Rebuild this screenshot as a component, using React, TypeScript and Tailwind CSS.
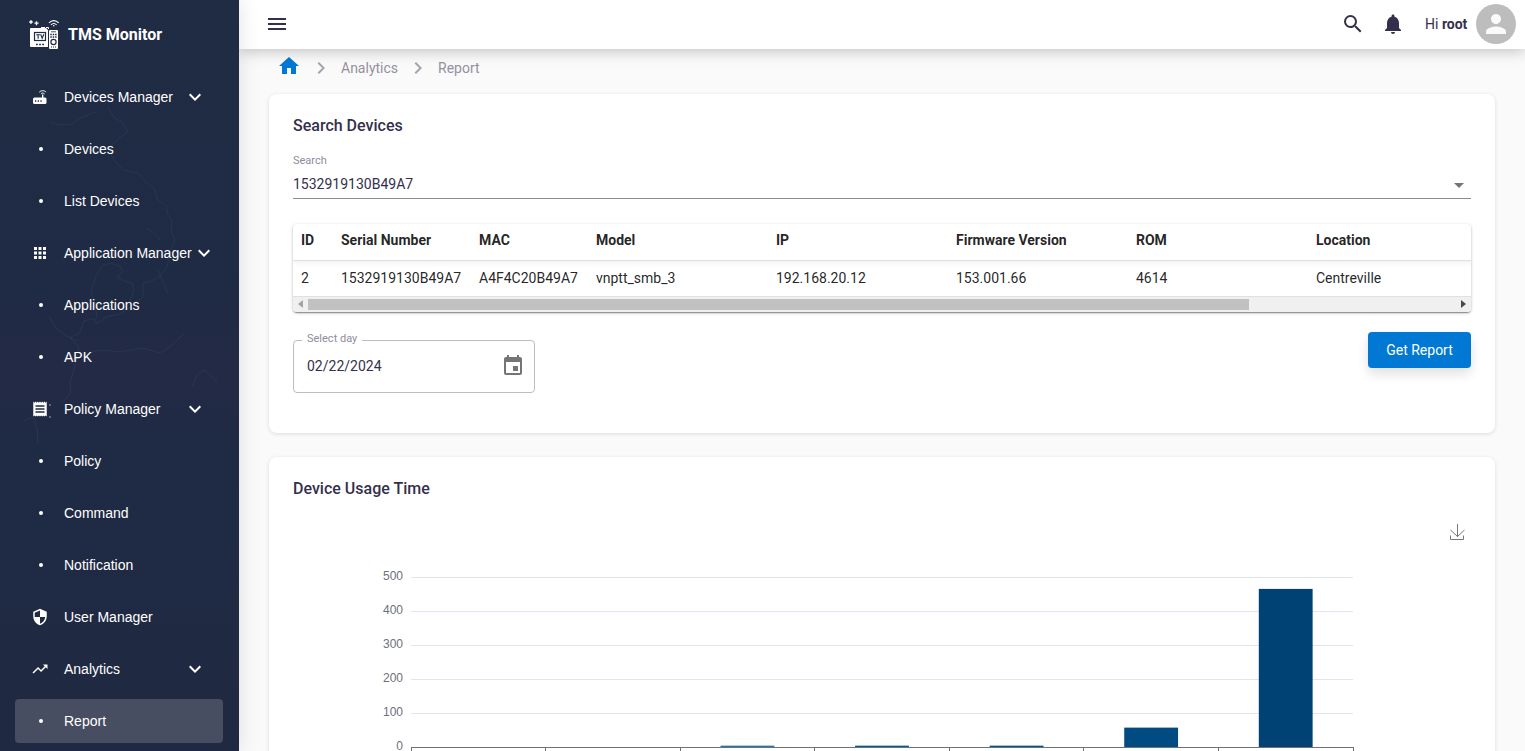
import { useState } from "react";
import type { ReactNode } from "react";
import {
  MdApps,
  MdChevronRight,
  MdEvent,
  MdExpandMore,
  MdHome,
  MdMenu,
  MdNotifications,
  MdPerson,
  MdSearch,
  MdSecurity,
  MdTrendingUp,
} from "react-icons/md";

type NavEntry = {
  label: string;
  icon?: ReactNode;
  group?: boolean;
  active?: boolean;
};

const RouterIcon = () => (
  <svg viewBox="0 0 18 18" className="h-[18px] w-[18px]" fill="none" stroke="currentColor">
    <path d="M3.500 9.500H14a1.500 1.500 0 0 1 1.500 1.500v3.500A1.500 1.500 0 0 1 14 16H3.500A1.500 1.500 0 0 1 2 14.500V11a1.500 1.500 0 0 1 1.500-1.500z" fill="currentColor" stroke="none" />
    <path d="M11.700 10V6.500" strokeWidth="1.400" />
    <path d="M8.300 4.200c1.700-2 5.100-2 6.800 0" />
    <path d="M9.900 5.900c.9-1.100 2.700-1.100 3.600 0" />
    <path d="M4 13h1.300M6.700 13H8M9.400 13h1.300" stroke="#1f2a44" strokeWidth="1.300" />
  </svg>
);

const PolicyIcon = () => (
  <svg viewBox="0 0 24 24" className="h-[18px] w-[18px] overflow-visible" fill="currentColor">
    <path d="M18 17H6v-2h12v2zm0-4H6v-2h12v2zm0-4H6V7h12v2zM3 22l1.500-1.500L6 22l1.500-1.500L9 22l1.500-1.500L12 22l1.500-1.500L15 22l1.500-1.500L18 22l1.500-1.500L21 22V2l-1.500 1.500L18 2l-1.500 1.500L15 2l-1.500 1.500L12 2l-1.500 1.500L9 2 7.500 3.500 6 2 4.500 3.500 3 2v20z" />
    <path d="M24.500 6h1.500v1.200h-1.500zM24.500 22h1.500v1.200h-1.500z" />
  </svg>
);

const navItems: NavEntry[] = [
  { label: "Devices Manager", icon: <RouterIcon />, group: true },
  { label: "Devices" },
  { label: "List Devices" },
  { label: "Application Manager", icon: <MdApps size={18} />, group: true },
  { label: "Applications" },
  { label: "APK" },
  { label: "Policy Manager", icon: <PolicyIcon />, group: true },
  { label: "Policy" },
  { label: "Command" },
  { label: "Notification" },
  { label: "User Manager", icon: <MdSecurity size={18} /> },
  { label: "Analytics", icon: <MdTrendingUp size={18} />, group: true },
  { label: "Report", active: true },
];

const columns = [
  { title: "ID", width: "w-10", value: "2" },
  { title: "Serial Number", width: "w-[138px]", value: "1532919130B49A7" },
  { title: "MAC", width: "w-[117px]", value: "A4F4C20B49A7" },
  { title: "Model", width: "w-[180px]", value: "vnptt_smb_3" },
  { title: "IP", width: "w-[180px]", value: "192.168.20.12" },
  { title: "Firmware Version", width: "w-[180px]", value: "153.001.66" },
  { title: "ROM", width: "w-[180px]", value: "4614" },
  { title: "Location", width: "w-[420px]", value: "Centreville" },
];

const usage = [
  { value: 0, color: "#2a7ab0" },
  { value: 0, color: "#2a7ab0" },
  { value: 4, color: "#1f77b4" },
  { value: 4, color: "#00609f" },
  { value: 4, color: "#005591" },
  { value: 57, color: "#004c82" },
  { value: 465, color: "#004274" },
];

function Logo() {
  return (
    <svg viewBox="0 0 30 30" className="h-[30px] w-[30px]" fill="none">
      <path d="M2 0l.8 1.200L4 2l-1.200.8L2 4l-.8-1.200L0 2l1.200-.8z" fill="#fff" stroke="#fff" strokeWidth=".4" />
      <path d="M7.500 1.200v4M5.500 3.200h4" stroke="#fff" strokeWidth="1.300" />
      <path d="M20 3c2.600-3.200 7-3.200 9.600 0M22 4.800c1.600-1.800 4-1.800 5.600 0" stroke="#fff" strokeWidth="1.100" />
      <circle cx="24.800" cy="5.800" r=".8" fill="#fff" />
      <path d="M12 7.500h7.500V10" stroke="#fff" strokeDasharray="4 1" />
      <path d="M1.500 8H17l2 2v17H2a1 1 0 0 1-1-1V8.500z" fill="#fff" />
      <rect x="5.500" y="12.500" width="11" height="8" stroke="#1f2a44" strokeWidth="1.200" />
      <path d="M7.300 14.700h3.600M9.100 14.700v4M11.600 14.300l1.600 4 1.600-4" stroke="#1f2a44" strokeWidth="1.100" />
      <path d="M7 24.500h1.800M10.100 24.500h1.800M13.200 24.500H15" stroke="#1f2a44" strokeWidth="1.600" />
      <rect x="19.500" y="9.500" width="10" height="20" rx="1.500" fill="#fff" stroke="#1f2a44" />
      <path d="M21.300 14.500h6.400M21.300 17h6.400" stroke="#1f2a44" strokeWidth="1.400" strokeDasharray="1.500 .9" />
      <path d="M22 11.800h5" stroke="#1f2a44" strokeWidth=".8" />
      <circle cx="24.500" cy="22" r="2.600" stroke="#1f2a44" strokeWidth="1.200" />
      <path d="M22 27h5" stroke="#1f2a44" strokeDasharray="1 1" />
    </svg>
  );
}

// Faint borders drawn behind the navigation
function MapBackdrop() {
  return (
    <svg
      viewBox="0 0 239 751"
      preserveAspectRatio="xMidYMin slice"
      className="pointer-events-none absolute inset-0 h-full w-full"
      fill="none"
      stroke="#3a5876"
      strokeOpacity=".26"
      aria-hidden="true"
    >
      <path d="M50 122L60 125 72 124 80 118 96 112M108 106L114 118 122 122 128 132 120 137 112 145 110 153 115 162 124 170 138 173 146 182 155 190 157 199 166 206 168 215 172 220 171 231 175 240 170 252 167 267 160 276 150 282 143 283 143 297 133 305 120 314 106 317 97 324 94 318 84 321 80 332 70 338 79 347 76 362 70 383 71 392 63 402" />
      <path d="M97 318L95 303 91 292 96 276 102 266 110 263 120 266 123 272 117 277 124 281 132 283 134 291 129 303" />
      <path d="M49 316L56 328 66 336 78 341M86 354L100 350 120 352 142 348 160 353 172 345 184 334M158 270L163 282 168 294M146 228L153 232 160 240" />
      <path d="M24 421L33 417 37 428 38 444M192 386L198 374 204 370 218 382" />
    </svg>
  );
}

function Sidebar() {
  return (
    <aside className="relative z-20 w-[239px] shrink-0 bg-[linear-gradient(180deg,#202b44_0%,#1f2a44_38%,#232a45_50%,#1f2a44_60%,#1f2942_100%)] text-white shadow-[0_0_20px_rgba(0,0,0,0.12)]">
      <MapBackdrop />
      <div className="relative flex h-[75px] items-start gap-[9px] pt-5 pl-[29px]">
        <Logo />
        <span className="text-base leading-[30px] font-bold">TMS Monitor</span>
      </div>
      <nav className="relative flex flex-col gap-2 pr-4 pb-2 pl-[15px] font-['Liberation_Sans',Arial,sans-serif]">
        {navItems.map((item) => (
          <a
            key={item.label}
            href="#"
            aria-current={item.active ? "page" : undefined}
            className={
              item.active
                ? "flex h-11 items-center rounded bg-[#474e61] pl-4 text-sm"
                : "flex h-11 items-center rounded pl-4 text-sm hover:bg-white/5"
            }
          >
            <span className="mr-[15px] flex w-[18px] shrink-0 justify-center">
              {item.icon ?? <span className="ml-px h-1 w-1 rounded-full bg-white" />}
            </span>
            <span className="min-w-[119px] whitespace-nowrap">{item.label}</span>
            {item.group && <MdExpandMore size={24} className="shrink-0" />}
          </a>
        ))}
      </nav>
    </aside>
  );
}

function TopBar() {
  return (
    <header className="relative z-10 flex h-[49px] shrink-0 items-center bg-white pr-[9px] pb-px pl-[26px] text-[#34304c] shadow-[0_2px_14px_rgba(0,0,0,0.24)]">
      <button type="button" aria-label="Toggle menu">
        <MdMenu size={24} />
      </button>
      <button type="button" aria-label="Search" className="ml-auto">
        <MdSearch size={24} />
      </button>
      <button type="button" aria-label="Notifications" className="ml-4">
        <MdNotifications size={24} />
      </button>
      <span className="ml-5 w-11 text-sm whitespace-nowrap">
        Hi <b className="font-bold">root</b>
      </span>
      <button
        type="button"
        aria-label="Account"
        className="ml-[7px] flex h-10 w-10 items-center justify-center rounded-full bg-[#bdbdbd] text-[#fafafa]"
      >
        <MdPerson size={30} />
      </button>
    </header>
  );
}

function Breadcrumb() {
  return (
    <nav className="mb-[7px] flex h-[38px] items-center gap-2 pl-2 text-sm text-[#94919f]">
      <a href="#" aria-label="Home" className="pb-1 text-[#0078d4]">
        <MdHome size={24} />
      </a>
      <MdChevronRight size={24} className="text-[#a5a3ad]" />
      <a href="#">Analytics</a>
      <MdChevronRight size={24} className="text-[#a5a3ad]" />
      <span>Report</span>
    </nav>
  );
}

function DeviceTable() {
  return (
    <div className="mt-[25px] overflow-hidden rounded bg-white shadow-[0_2px_1px_-1px_rgba(0,0,0,0.3),0_1px_3px_rgba(0,0,0,0.3)]">
      <div className="overflow-x-auto [scrollbar-width:none]">
        <table className="w-[1435px] table-fixed text-left text-sm text-black/87">
          <thead className="shadow-[0_2px_6px_rgba(0,0,0,0.08)]">
            <tr className="h-9 border-b border-[#e0e0e0]">
              {columns.map((col) => (
                <th key={col.title} className={`${col.width} px-2 pb-1 font-bold whitespace-nowrap`}>
                  {col.title}
                </th>
              ))}
            </tr>
          </thead>
          <tbody>
            <tr className="h-9 border-b border-[#e0e0e0]">
              {columns.map((col) => (
                <td key={col.title} className="px-2 pb-px whitespace-nowrap">
                  {col.value}
                </td>
              ))}
            </tr>
          </tbody>
        </table>
      </div>
      {/* Scroll track */}
      <div className="flex h-[15px] items-center justify-between bg-[#f0f0f0] px-[5px]" aria-hidden="true">
        <svg viewBox="0 0 5 8" className="h-2 w-[5px] shrink-0" fill="#a3a3a3">
          <path d="M5 0v8L0 4z" />
        </svg>
        <div className="mx-[5px] flex-1">
          <div className="h-[11px] w-[82%] bg-[#c1c1c1]" />
        </div>
        <svg viewBox="0 0 5 8" className="h-2 w-[5px] shrink-0" fill="#4a4a4a">
          <path d="M0 0v8l5-4z" />
        </svg>
      </div>
    </div>
  );
}

function SearchCard() {
  const [day, setDay] = useState("02/22/2024");

  return (
    <section className="rounded-lg bg-white px-6 pt-5 pb-10 shadow-[0_1px_4px_rgba(0,0,0,0.12)]">
      <h2 className="text-base leading-6 font-medium">Search Devices</h2>
      <label htmlFor="device" className="mt-[15px] block text-[11px] leading-4 text-[#8f8c9c]">
        Search
      </label>
      <div className="relative">
        <select
          id="device"
          className="block h-[30px] w-full appearance-none border-b border-[#8c8c8c] bg-transparent text-sm outline-none"
        >
          <option>1532919130B49A7</option>
        </select>
        <svg
          viewBox="0 0 10 5"
          className="pointer-events-none absolute top-[14px] right-[7px] h-[5px] w-[10px]"
          fill="#757575"
        >
          <path d="M0 0h10L5 5z" />
        </svg>
      </div>

      <DeviceTable />

      <div className="mt-5 flex items-start justify-between">
        <div className="relative mt-2 flex h-[53px] w-[242px] items-center rounded border border-[#bdbdbd] pr-[9px] pl-[13px]">
          <label
            htmlFor="day"
            className="absolute -top-[10px] left-2 bg-white px-[5px] text-[11px] leading-4 text-[#8f8c9c]"
          >
            Select day
          </label>
          <input
            id="day"
            value={day}
            onChange={(e) => setDay(e.target.value)}
            className="min-w-0 flex-1 bg-transparent text-sm outline-none"
          />
          <button type="button" aria-label="Open calendar" className="text-[#757575]">
            <MdEvent size={24} />
          </button>
        </div>
        <button
          type="button"
          className="h-9 w-[103px] rounded bg-[#0078d4] text-sm text-white shadow-[0_6px_12px_rgba(0,0,0,0.12)]"
        >
          Get Report
        </button>
      </div>
    </section>
  );
}

function UsageChart() {
  const left = 118;
  const right = 1060;
  const zero = 230;
  const step = (right - left) / usage.length;
  const barWidth = step * 0.4;

  return (
    <svg
      viewBox="0 0 1178 290"
      className="mt-4 block h-auto w-full font-['Liberation_Sans',Arial,sans-serif]"
      role="img"
      aria-label="Device usage time"
    >
      {[500, 400, 300, 200, 100, 0].map((tick, i) => (
        <g key={tick}>
          {tick > 0 && <path d={`M${left} ${60.5 + i * 34}H${right}`} stroke="#e0e6f1" />}
          <text x={left - 8} y={63 + i * 34} textAnchor="end" fontSize="12" fill="#6e7079">
            {tick}
          </text>
        </g>
      ))}
      {usage.map((bar, i) => {
        const height = (bar.value / 500) * 170;
        return (
          <rect
            key={i}
            x={left + step * (i + 0.5) - barWidth / 2}
            y={zero - height}
            width={barWidth}
            height={height}
            fill={bar.color}
          />
        );
      })}
      <path d={`M${left} ${zero + 0.5}H${right + 1}`} stroke="#6e7079" />
      {Array.from({ length: usage.length + 1 }, (_, i) => (
        <path key={i} d={`M${Math.floor(left + step * i) + 0.5} ${zero}v5`} stroke="#6e7079" />
      ))}
      <path
        d="M1164.500 7v13M1157.500 13l7 6.500 7-6.500M1157.500 18.500v4h13v-4"
        fill="none"
        stroke="#777"
      />
    </svg>
  );
}

export default function App() {
  return (
    <div className="flex h-screen overflow-hidden bg-[#fafafa] font-[Roboto,sans-serif] text-[#34304c]">
      <Sidebar />
      <div className="flex min-w-0 flex-1 flex-col">
        <TopBar />
        <main className="min-h-0 flex-1 overflow-y-auto px-[30px] pb-6 [scrollbar-width:none]">
          <Breadcrumb />
          <SearchCard />
          <section className="mt-6 rounded-lg bg-white px-6 pt-5 pb-6 shadow-[0_1px_4px_rgba(0,0,0,0.12)]">
            <h2 className="text-base leading-6 font-medium">Device Usage Time</h2>
            <UsageChart />
          </section>
        </main>
      </div>
    </div>
  );
}
